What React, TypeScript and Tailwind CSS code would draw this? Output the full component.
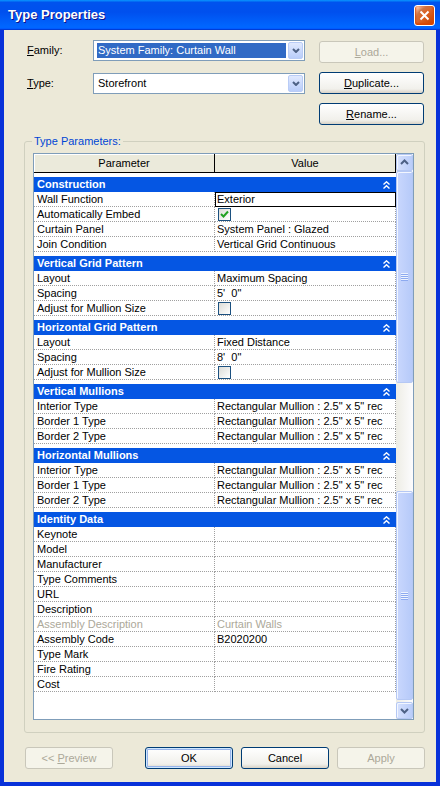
import React from 'react';
import clsx from 'clsx';

type Row = { name: string; value?: string; kind?: 'text' | 'check' | 'uncheck' | 'edit'; dim?: boolean };
type Section = { title: string; rows: Row[] };

const mullion = 'Rectangular Mullion : 2.5" x 5" rec';

const sections: Section[] = [
  {
    title: 'Construction',
    rows: [
      { name: 'Wall Function', value: 'Exterior', kind: 'edit' },
      { name: 'Automatically Embed', kind: 'check' },
      { name: 'Curtain Panel', value: 'System Panel : Glazed' },
      { name: 'Join Condition', value: 'Vertical Grid Continuous' },
    ],
  },
  {
    title: 'Vertical Grid Pattern',
    rows: [
      { name: 'Layout', value: 'Maximum Spacing' },
      { name: 'Spacing', value: "5'\u00a0\u00a00\"" },
      { name: 'Adjust for Mullion Size', kind: 'uncheck' },
    ],
  },
  {
    title: 'Horizontal Grid Pattern',
    rows: [
      { name: 'Layout', value: 'Fixed Distance' },
      { name: 'Spacing', value: "8'\u00a0\u00a00\"" },
      { name: 'Adjust for Mullion Size', kind: 'uncheck' },
    ],
  },
  {
    title: 'Vertical Mullions',
    rows: [
      { name: 'Interior Type', value: mullion },
      { name: 'Border 1 Type', value: mullion },
      { name: 'Border 2 Type', value: mullion },
    ],
  },
  {
    title: 'Horizontal Mullions',
    rows: [
      { name: 'Interior Type', value: mullion },
      { name: 'Border 1 Type', value: mullion },
      { name: 'Border 2 Type', value: mullion },
    ],
  },
  {
    title: 'Identity Data',
    rows: [
      { name: 'Keynote' },
      { name: 'Model' },
      { name: 'Manufacturer' },
      { name: 'Type Comments' },
      { name: 'URL' },
      { name: 'Description' },
      { name: 'Assembly Description', value: 'Curtain Walls', dim: true },
      { name: 'Assembly Code', value: 'B2020200' },
      { name: 'Type Mark' },
      { name: 'Fire Rating' },
      { name: 'Cost' },
    ],
  },
];

function XPButton({
  children,
  disabled,
  isDefault,
  className,
}: {
  children: React.ReactNode;
  disabled?: boolean;
  isDefault?: boolean;
  className?: string;
}) {
  return (
    <div
      className={clsx(
        'h-[22px] rounded-[3px] border flex items-center justify-center',
        disabled
          ? 'border-[#C9C7BA] bg-[#F5F4EA] text-[#ACA899]'
          : 'border-[#003C74] bg-[linear-gradient(to_bottom,#FFFFFF,#F1F0EB_80%,#D8D2C6)] text-black',
        isDefault && 'shadow-[inset_0_0_0_1px_#CEE7FF,inset_0_0_0_2px_#98B4EA]',
        className,
      )}
    >
      {children}
    </div>
  );
}

function Checkbox({ checked }: { checked?: boolean }) {
  return (
    <div className="w-[13px] h-[13px] ml-[1px] border border-[#1C5180] bg-[linear-gradient(135deg,#DCDCD7,#FFFFFF)] flex items-center justify-center">
      {checked && (
        <svg width="9" height="9" viewBox="0 0 9 9">
          <path d="M1 4 L3.5 6.5 L8 1.5" stroke="#21A121" strokeWidth="2" fill="none" />
        </svg>
      )}
    </div>
  );
}

function Collapse() {
  return (
    <svg width="7" height="8" viewBox="0 0 7 8">
      <path d="M0.5 3.5 L3.5 0.8 L6.5 3.5" stroke="#FFFFFF" strokeWidth="1.4" fill="none" />
      <path d="M0.5 7.5 L3.5 4.8 L6.5 7.5" stroke="#FFFFFF" strokeWidth="1.4" fill="none" />
    </svg>
  );
}

function ScrollBtn({ dir }: { dir: 'up' | 'down' }) {
  return (
    <div className="h-[17px] rounded-[2px] border border-[#B5C8F4] bg-[linear-gradient(to_right,#D6E1FD,#BACDF9)] shadow-[inset_1px_1px_#F2F6FF] flex items-center justify-center">
      <svg width="9" height="6" viewBox="0 0 9 6">
        <path
          d={dir === 'up' ? 'M1 5 L4.5 1.5 L8 5' : 'M1 1 L4.5 4.5 L8 1'}
          stroke="#4D6185"
          strokeWidth="2"
          fill="none"
        />
      </svg>
    </div>
  );
}

function Thumb({ h }: { h: string }) {
  return (
    <div
      className={clsx(
        h,
        'rounded-[2px] border border-[#B5C8F4] bg-[linear-gradient(to_right,#C9D7FD,#B6CAF9)] shadow-[inset_1px_1px_#F2F6FF] flex flex-col items-center justify-center gap-[1px]',
      )}
    >
      {[0, 1, 2, 3].map((i) => (
        <div key={i} className="w-[7px] h-[1px] bg-[#EEF4FE] shadow-[0_1px_#8DAAF0]" />
      ))}
    </div>
  );
}

function Combo({ text, selected }: { text: string; selected?: boolean }) {
  return (
    <div className="w-[212px] h-[21px] border border-[#7F9DB9] bg-white flex items-center p-[1px]">
      <div className="flex-1 h-full flex items-center pl-[2px] pr-[2px]">
        <div
          className={clsx(
            'w-full h-[15px] flex items-center pl-[1px]',
            selected ? 'bg-[#316AC5] text-white' : 'text-black',
          )}
        >
          {text}
        </div>
      </div>
      <div className="w-[15px] h-full rounded-[2px] border border-[#B9CCF6] bg-[linear-gradient(to_bottom,#E0E9FE,#B9CDFA)] flex items-center justify-center">
        <svg width="8" height="5" viewBox="0 0 8 5">
          <path d="M1 1 L4 4 L7 1" stroke="#4D6185" strokeWidth="2" fill="none" />
        </svg>
      </div>
    </div>
  );
}

function GridRow({ row }: { row: Row }) {
  return (
    <div className="flex h-[15px] leading-[14px]">
      <div
        className={clsx(
          'w-[181px] pl-[3px] border-r border-b border-dotted border-[#A0A0A0] whitespace-nowrap overflow-hidden',
          row.dim && 'text-[#ACA899]',
        )}
      >
        {row.name}
      </div>
      {row.kind === 'edit' ? (
        <div className="w-[181px] pl-[1px] border border-black bg-white leading-[13px] whitespace-nowrap">
          {row.value}
        </div>
      ) : (
        <div
          className={clsx(
            'w-[181px] pl-[2px] border-r border-b border-dotted border-[#A0A0A0] whitespace-nowrap overflow-hidden flex items-center',
            row.dim && 'text-[#ACA899]',
          )}
        >
          {row.kind === 'check' && <Checkbox checked />}
          {row.kind === 'uncheck' && <Checkbox />}
          {row.value}
        </div>
      )}
    </div>
  );
}

function ParamSection({ section }: { section: Section }) {
  return (
    <div className="pt-[4px]">
      <div className="h-[15px] bg-[#0556E3] text-white font-bold flex items-center justify-between pl-[3px] pr-[6px]">
        <span>{section.title}</span>
        <Collapse />
      </div>
      {section.rows.map((r, i) => (
        <GridRow key={i} row={r} />
      ))}
    </div>
  );
}

export default function App() {
  return (
    <div className="w-[440px] h-[786px] flex flex-col font-['Liberation_Sans',Arial,sans-serif] text-[11px] text-black select-none">
      {/* Title bar */}
      <div className="h-[30px] flex items-center justify-between pl-[8px] pr-[5px] bg-[linear-gradient(to_bottom,#0997FF,#0053EE_8%,#0050EE_40%,#0066FF_88%,#0066FF_93%,#005BFF_95%,#003DD7_96%,#003DD7)]">
        <span className="text-white text-[13px] font-bold [text-shadow:1px_1px_#0F1089]">Type Properties</span>
        <div className="w-[21px] h-[21px] rounded-[3px] border border-white bg-[radial-gradient(circle_at_90%_90%,#CC4600_0%,#DC6527_55%,#CD7546_70%,#FFCCB2_90%,#FFFFFF_100%)] shadow-[inset_0_-1px_2px_1px_#DA4600] flex items-center justify-center">
          <svg width="11" height="11" viewBox="0 0 11 11">
            <path d="M1.5 1.5 L9.5 9.5 M9.5 1.5 L1.5 9.5" stroke="#FFFFFF" strokeWidth="2" />
          </svg>
        </div>
      </div>

      {/* Body */}
      <div className="flex-1 flex flex-col border-x-4 border-b-4 border-[#0831D9] bg-[#ECE9D8]">
        {/* Family / Type */}
        <div className="h-[95px] flex pl-[23px]">
          <div className="flex flex-col pt-[10px] gap-[12px]">
            <div className="flex items-center">
              <span className="w-[66px]">
                <span className="underline">F</span>amily:
              </span>
              <Combo text="System Family: Curtain Wall" selected />
            </div>
            <div className="flex items-center">
              <span className="w-[66px]">
                <span className="underline">T</span>ype:
              </span>
              <Combo text="Storefront" />
            </div>
          </div>
          <div className="flex flex-col pt-[11px] gap-[9px] ml-[14px]">
            <XPButton disabled className="w-[105px]">
              <span>
                <span className="underline">L</span>oad...
              </span>
            </XPButton>
            <XPButton className="w-[105px]">
              <span>
                <span className="underline">D</span>uplicate...
              </span>
            </XPButton>
            <XPButton className="w-[105px]">
              <span>
                <span className="underline">R</span>ename...
              </span>
            </XPButton>
          </div>
        </div>

        {/* Group box */}
        <div className="relative mt-[16px] ml-[20px] w-[401px] h-[592px] border border-[#D0D0BF] rounded-[3px] pl-[8px] pt-[11px]">
          <span className="absolute -top-[9px] left-[7px] px-[2px] bg-[#ECE9D8] text-[#0046D5]">Type Parameters:</span>
          <div className="w-[381px] h-[567px] border border-[#7F9DB9] flex bg-white">
            {/* Table */}
            <div className="w-[362px] flex flex-col">
              <div className="h-[19px] flex bg-[#EBEADB] border-b border-black shadow-[inset_1px_1px_#FFFFFF]">
                <div className="w-[181px] border-r border-black flex items-center justify-center">Parameter</div>
                <div className="w-[181px] border-r border-black flex items-center justify-center">Value</div>
              </div>
              {sections.map((s, i) => (
                <ParamSection key={i} section={s} />
              ))}
              <div className="flex-1" />
            </div>
            {/* Scrollbar */}
            <div className="w-[17px] flex flex-col bg-[linear-gradient(to_right,#EEEDE5,#FCFCFE)]">
              <ScrollBtn dir="up" />
              <Thumb h="h-[212px]" />
              <div className="h-[109px]" />
              <Thumb h="h-[209px]" />
              <div className="h-[2px]" />
              <ScrollBtn dir="down" />
            </div>
          </div>
        </div>

        {/* Bottom buttons */}
        <div className="mt-[14px] flex pl-[21px]">
          <XPButton disabled className="w-[88px]">
            <span>
              {'<< '}
              <span className="underline">P</span>review
            </span>
          </XPButton>
          <XPButton isDefault className="w-[88px] ml-[32px]">
            OK
          </XPButton>
          <XPButton className="w-[88px] ml-[8px]">Cancel</XPButton>
          <XPButton disabled className="w-[88px] ml-[8px]">
            Apply
          </XPButton>
        </div>
      </div>
    </div>
  );
}
